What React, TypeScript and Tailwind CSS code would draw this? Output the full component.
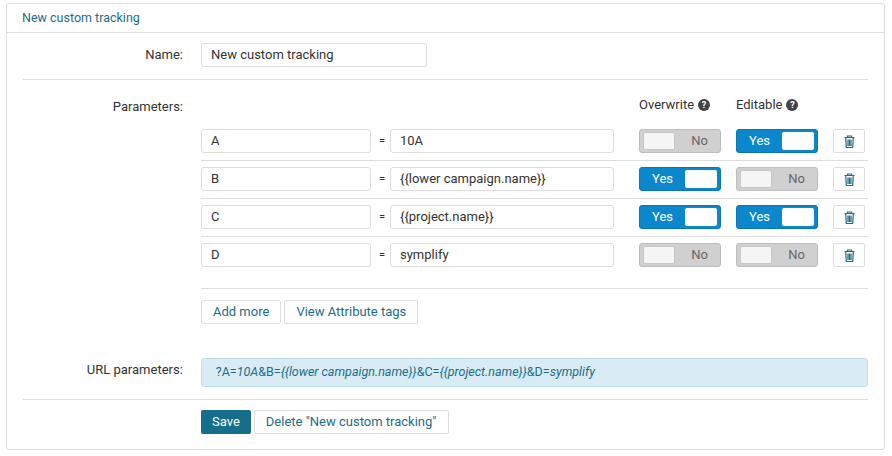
import React from "react";

const Toggle = ({ on }: { on: boolean }) =>
  on ? (
    <div className="w-[82px] h-[24px] rounded-[3px] bg-[#0b87cc] border border-[#0a76b4] flex items-center justify-between pl-[12px] pr-[3px]">
      <span className="text-white text-[13px]">Yes</span>
      <div className="w-[32px] h-[18px] bg-white rounded-[2px]" />
    </div>
  ) : (
    <div className="w-[82px] h-[24px] rounded-[3px] bg-[#d0d0d0] border border-[#bdbdbd] flex items-center justify-between pl-[3px] pr-[12px]">
      <div className="w-[32px] h-[18px] bg-[#f5f5f5] rounded-[2px] border border-[#c8c8c8]" />
      <span className="text-[#666] text-[13px]">No</span>
    </div>
  );

const Trash = () => (
  <div className="w-[32px] h-[24px] border border-[#ddd] rounded-[2px] flex items-center justify-center bg-white">
    <svg width="11" height="13" viewBox="0 0 11 13" fill="none" stroke="#1a6e87" strokeWidth="1.2">
      <path d="M0.5 2.5h10M3.5 2.5V1h4v1.5M1.7 2.5l.6 10h6.4l.6-10M4 4.5v6.5M5.5 4.5v6.5M7 4.5v6.5" />
    </svg>
  </div>
);

const Input = ({ v, w }: { v: string; w: string }) => (
  <div className={`${w} h-[24px] border border-[#ddd] rounded-[3px] px-[9px] flex items-center text-[13px] text-[#333] bg-white`}>{v}</div>
);

const Q = () => (
  <span className="inline-flex w-[12px] h-[12px] rounded-full bg-[#444] text-white text-[9px] font-bold items-center justify-center ml-[4px] leading-none">?</span>
);

const rows: [string, string, boolean, boolean][] = [
  ["A", "10A", false, true],
  ["B", "{{lower campaign.name}}", true, false],
  ["C", "{{project.name}}", true, true],
  ["D", "symplify", false, false],
];

export default function App() {
  return (
    <div className="w-[892px] h-[456px] bg-white pt-[3px] pl-[6px]" style={{ fontFamily: "Roboto, 'Liberation Sans', sans-serif" }}>
      <div className="w-[879px] h-[447px] border border-[#ddd] rounded-[3px] text-[13px] text-[#333]">
        <div className="h-[29px] border-b border-[#ddd] px-[15px] flex items-center text-[#1a6e87] text-[12.5px]">New custom tracking</div>
        <div className="px-[16px]">
          <div className="flex items-center h-[47px] border-b border-[#ddd] pb-[3px]">
            <div className="w-[160px] text-right">Name:</div>
            <div className="ml-[18px]"><Input v="New custom tracking" w="w-[226px]" /></div>
          </div>
          <div className="flex pt-[15px] pb-[12px] border-b border-[#ddd]">
            <div className="w-[160px] text-right pt-[2px]">Parameters:</div>
            <div className="ml-[18px] w-[667px]">
              <div className="flex h-[20px] items-center mb-[14px]">
                <div className="ml-[438px] w-[97px] flex items-center">Overwrite<Q /></div>
                <div className="flex items-center">Editable<Q /></div>
              </div>
              {rows.map(([k, v, o, e], i) => (
                <div key={k} className={`flex items-center pb-[7px] ${i > 0 ? "pt-[6px]" : ""} ${i < 3 ? "border-b border-[#ddd]" : ""}`}>
                  <Input v={k} w="w-[170px]" />
                  <span className="w-[19px] text-center text-[11px] pl-[3px]">=</span>
                  <Input v={v} w="w-[224px]" />
                  <div className="ml-[25px]"><Toggle on={o} /></div>
                  <div className="ml-[15px]"><Toggle on={e} /></div>
                  <div className="ml-[15px]"><Trash /></div>
                </div>
              ))}
              <div className="border-t border-[#ddd] mt-[14px] pt-[11px] flex gap-[3px] pb-[34px]">
                <button className="h-[24px] px-[11px] border border-[#ddd] rounded-[2px] text-[#1a6e87]">Add more</button>
                <button className="h-[24px] px-[11px] border border-[#ddd] rounded-[2px] text-[#1a6e87]">View Attribute tags</button>
              </div>
              <div className="flex items-center -ml-[178px]">
                <div className="w-[160px] text-right -mt-[6px]">URL parameters:</div>
                <div className="ml-[18px] w-[668px] h-[29px] bg-[#d9ecf5] border border-[#bfdeed] rounded-[3px] flex items-center px-[14px] text-[12.5px] text-[#1a6e87]">
                  <span>?A=</span><i>10A</i><span>&amp;B=</span><i>{"{{lower campaign.name}}"}</i><span>&amp;C=</span><i>{"{{project.name}}"}</i><span>&amp;D=</span><i>symplify</i>
                </div>
              </div>
            </div>
          </div>
          <div className="flex pt-[10px] pl-[178px] gap-[3px]">
            <button className="h-[24px] px-[11px] bg-[#156f8a] text-white rounded-[2px]">Save</button>
            <button className="h-[24px] px-[11px] border border-[#ddd] rounded-[2px] text-[#1a6e87]">Delete "New custom tracking"</button>
          </div>
        </div>
      </div>
    </div>
  );
}
